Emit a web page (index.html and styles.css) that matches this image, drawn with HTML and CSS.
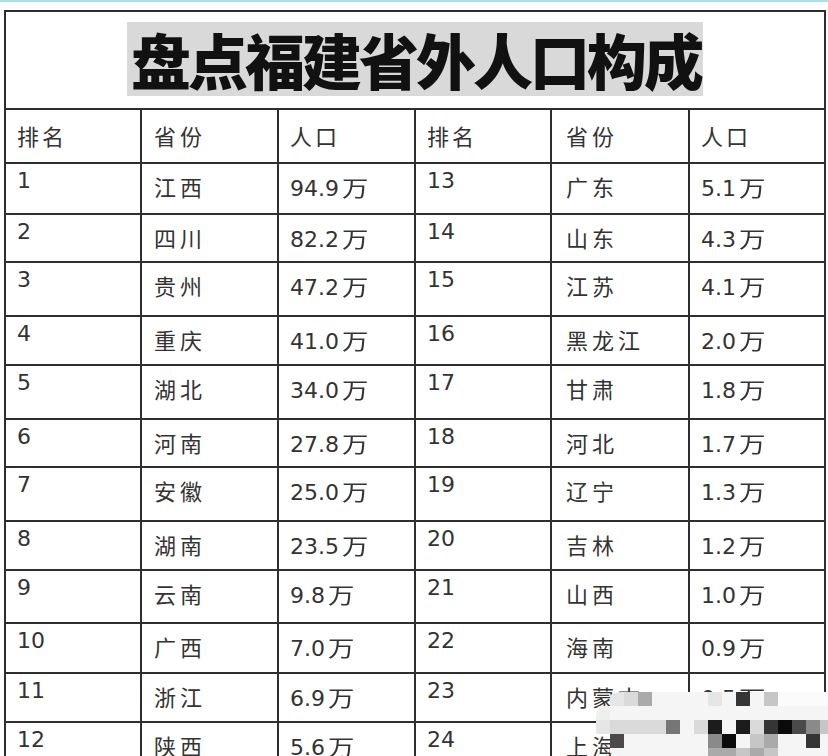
FILE: index.html
```html
<!DOCTYPE html>
<html lang="zh-CN">
<head>
<meta charset="utf-8">
<title>盘点福建省外人口构成</title>
<link rel="stylesheet" href="styles.css">
</head>
<body>
<div class="page">
  <div class="strip"></div>
  <div class="sheet">
    <div class="title-cell"><span class="title">盘点福建省外人口构成</span></div>

    <div class="c h">排名</div><div class="c h prov">省份</div><div class="c h pop">人口</div>
    <div class="c h">排名</div><div class="c h prov r">省份</div><div class="c h pop">人口</div>

    <div class="c rank">1</div><div class="c prov">江西</div><div class="c pop">94.9<span class="u">万</span></div>
    <div class="c rank">13</div><div class="c prov r">广东</div><div class="c pop">5.1<span class="u">万</span></div>

    <div class="c rank">2</div><div class="c prov">四川</div><div class="c pop">82.2<span class="u">万</span></div>
    <div class="c rank">14</div><div class="c prov r">山东</div><div class="c pop">4.3<span class="u">万</span></div>

    <div class="c rank">3</div><div class="c prov">贵州</div><div class="c pop">47.2<span class="u">万</span></div>
    <div class="c rank">15</div><div class="c prov r">江苏</div><div class="c pop">4.1<span class="u">万</span></div>

    <div class="c rank">4</div><div class="c prov">重庆</div><div class="c pop">41.0<span class="u">万</span></div>
    <div class="c rank">16</div><div class="c prov r">黑龙江</div><div class="c pop">2.0<span class="u">万</span></div>

    <div class="c rank">5</div><div class="c prov">湖北</div><div class="c pop">34.0<span class="u">万</span></div>
    <div class="c rank">17</div><div class="c prov r">甘肃</div><div class="c pop">1.8<span class="u">万</span></div>

    <div class="c rank">6</div><div class="c prov">河南</div><div class="c pop">27.8<span class="u">万</span></div>
    <div class="c rank">18</div><div class="c prov r">河北</div><div class="c pop">1.7<span class="u">万</span></div>

    <div class="c rank">7</div><div class="c prov">安徽</div><div class="c pop">25.0<span class="u">万</span></div>
    <div class="c rank">19</div><div class="c prov r">辽宁</div><div class="c pop">1.3<span class="u">万</span></div>

    <div class="c rank">8</div><div class="c prov">湖南</div><div class="c pop">23.5<span class="u">万</span></div>
    <div class="c rank">20</div><div class="c prov r">吉林</div><div class="c pop">1.2<span class="u">万</span></div>

    <div class="c rank">9</div><div class="c prov">云南</div><div class="c pop">9.8<span class="u">万</span></div>
    <div class="c rank">21</div><div class="c prov r">山西</div><div class="c pop">1.0<span class="u">万</span></div>

    <div class="c rank">10</div><div class="c prov">广西</div><div class="c pop">7.0<span class="u">万</span></div>
    <div class="c rank">22</div><div class="c prov r">海南</div><div class="c pop">0.9<span class="u">万</span></div>

    <div class="c rank">11</div><div class="c prov">浙江</div><div class="c pop">6.9<span class="u">万</span></div>
    <div class="c rank">23</div><div class="c prov r">内蒙古</div><div class="c pop">0.5<span class="u">万</span></div>

    <div class="c rank">12</div><div class="c prov">陕西</div><div class="c pop">5.6<span class="u">万</span></div>
    <div class="c rank">24</div><div class="c prov r">上海</div><div class="c pop">0.5<span class="u">万</span></div>
  </div>

  <div class="mosaic" aria-hidden="true">
    <i class="t"></i><i class="g1"></i><i class="g2"></i><i class="g4"></i><i></i><i></i><i></i><i></i><i class="g1"></i><i></i><i class="g8"></i><i></i><i class="g3"></i><i class="w"></i><i class="w"></i><i class="w"></i><i class="w"></i>
    <i class="g0"></i><i></i><i></i><i></i><i></i><i></i><i></i><i></i><i></i><i></i><i></i><i></i><i></i><i></i><i></i><i></i><i></i>
    <i class="g1"></i><i class="g2"></i><i class="g2"></i><i class="g2"></i><i class="g2"></i><i class="g6"></i><i></i><i class="g2"></i><i class="g9"></i><i></i><i class="g9"></i><i class="g2"></i><i class="g8"></i><i class="g10"></i><i class="g7"></i><i class="g5"></i><i class="g3"></i>
    <i class="t"></i><i class="g7"></i><i></i><i></i><i></i><i></i><i></i><i></i><i class="g5"></i><i class="g10"></i><i></i><i class="g3"></i><i class="g4"></i><i></i><i></i><i class="g8"></i><i></i>
    <i class="t"></i><i></i><i></i><i></i><i></i><i></i><i></i><i></i><i class="g4"></i><i class="g4"></i><i class="g3"></i><i class="g4"></i><i class="g3"></i><i></i><i></i><i></i><i></i>
  </div>
</div>
</body>
</html>
```

FILE: styles.css
```css
html, body {
  margin: 0;
  padding: 0;
  background: #ffffff;
}

.page {
  position: relative;
  width: 828px;
  height: 756px;
  overflow: hidden;
  background: #ffffff;
}

.strip {
  height: 2px;
  background: #a9e2e8;
}

.sheet {
  margin: 8px 0 0 4px;
  display: grid;
  width: max-content;
  grid-template-columns: 136px 137px 137px 136px 138px 136px;
  grid-template-rows: 98px 54px 51px 48px 54px 49px 54px 48px 54px 49px 53px 50px 49px 50px;
  border-left: 2px solid #2e2e2e;
  border-top: 2px solid #2e2e2e;
}

.title-cell {
  grid-column: 1 / -1;
  display: flex;
  align-items: center;
  justify-content: center;
  border-right: 2px solid #2e2e2e;
  border-bottom: 2px solid #2e2e2e;
  padding-bottom: 2px;
  box-sizing: border-box;
}

.title {
  display: inline-block;
  background: #d9d9d9;
  padding: 0 2px 0 4px;
  height: 74px;
  line-height: 74px;
  font-family: "Noto Sans CJK SC", sans-serif;
  font-weight: 900;
  font-size: 60px;
  letter-spacing: -3px;
  color: #111111;
}

.c {
  box-sizing: border-box;
  border-right: 2px solid #2e2e2e;
  border-bottom: 2px solid #2e2e2e;
  font-family: "DejaVu Sans", "Noto Sans CJK SC", sans-serif;
  font-size: 22px;
  line-height: 24px;
  color: #333333;
  padding: 10px 0 0 11px;
  white-space: nowrap;
}

.h {
  padding-top: 13px;
  font-family: "Noto Sans CJK SC", sans-serif;
  letter-spacing: 3px;
}

.rank {
  padding-top: 5px;
}

.prov {
  padding-left: 12px;
  font-family: "Noto Sans CJK SC", sans-serif;
  letter-spacing: 4px;
}

.prov.r {
  padding-left: 14px;
}

.pop {
  padding-left: 11px;
}

.u {
  font-family: "Noto Sans CJK SC", sans-serif;
  margin-left: 3px;
  display: inline-block;
  transform: scaleX(1.2);
  transform-origin: left center;
}

/* pixelated watermark laid over the bottom-right corner */
.mosaic {
  position: absolute;
  left: 596px;
  top: 692px;
  width: 232px;
  height: 64px;
  display: grid;
  grid-template-columns: repeat(17, 14px);
  grid-template-rows: repeat(5, 14px);
  overflow: hidden;
  border-radius: 26px 0 0 26px;
  filter: blur(0.5px);
}

.mosaic i {
  display: block;
  background: #f5f5f5;
}

.mosaic i.t { background: transparent; }
.mosaic i.w { background: #fbfbfb; }
.mosaic i.g0 { background: #efefef; }
.mosaic i.g1 { background: #e6e6e6; }
.mosaic i.g2 { background: #dadada; }
.mosaic i.g3 { background: #c6c6c6; }
.mosaic i.g4 { background: #aaaaaa; }
.mosaic i.g5 { background: #8a8a8a; }
.mosaic i.g6 { background: #767676; }
.mosaic i.g7 { background: #4a4a4a; }
.mosaic i.g8 { background: #353535; }
.mosaic i.g9 { background: #1c1c1c; }
.mosaic i.g10 { background: #0b0b0b; }
```
